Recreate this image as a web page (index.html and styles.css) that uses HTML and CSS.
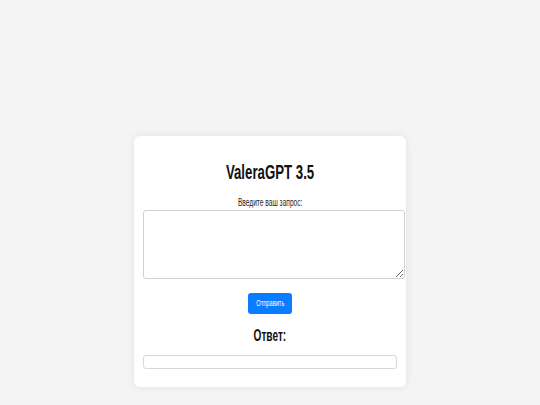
FILE: index.html
```html
<!DOCTYPE html>
<html lang="ru">
<head>
<meta charset="utf-8">
<title>ValeraGPT 3.5</title>
<link rel="stylesheet" href="styles.css">
</head>
<body>
<main class="card">
  <h1 class="title"><span class="sq">ValeraGPT 3.5</span></h1>
  <label class="label" for="q"><span class="sq">Введите ваш запрос:</span></label>
  <textarea id="q" class="prompt"></textarea>
  <div class="actions">
    <button class="send" type="button"><span class="sq">Отправить</span></button>
  </div>
  <h2 class="answer-title"><span class="sq">Ответ:</span></h2>
  <div class="answer"></div>
</main>
</body>
</html>
```

FILE: styles.css
```css
html, body {
  margin: 0;
  padding: 0;
}
body {
  background: #f4f4f4;
  font-family: "Liberation Sans", Arial, sans-serif;
  color: #222;
  min-height: 405px;
}
.card {
  box-sizing: border-box;
  width: 272px;
  margin: 136px auto 0;
  padding: 25px 9px 18px;
  background: #fff;
  border-radius: 6px;
  box-shadow: 0 0 8px rgba(0, 0, 0, 0.08);
  display: flex;
  flex-direction: column;
  align-items: stretch;
}
.sq {
  display: inline-block;
  transform: scaleX(0.63);
  transform-origin: center;
  white-space: nowrap;
}
.title {
  margin: 0;
  font-size: 21px;
  line-height: 21px;
  font-weight: bold;
  text-align: center;
  color: #111;
}
.label {
  display: block;
  margin-top: 14px;
  font-size: 10.5px;
  line-height: 12px;
  text-align: center;
  color: #1e1e1e;
}
.prompt {
  display: block;
  box-sizing: border-box;
  width: 262px;
  height: 69px;
  margin: 2px 0 0;
  padding: 4px;
  border: 1px solid #d0d0d0;
  border-radius: 3px;
  background: #fff;
  font-family: inherit;
}
.actions {
  display: flex;
  justify-content: center;
  margin-top: 14px;
}
.send {
  width: 44px;
  height: 21px;
  padding: 0;
  border: none;
  border-radius: 3px;
  background: #0a7cff;
  color: #fff;
  font-family: inherit;
  font-size: 9px;
  line-height: 21px;
}
.answer-title {
  margin: 14px 0 0;
  font-size: 16px;
  line-height: 16px;
  font-weight: bold;
  text-align: center;
  color: #111;
}
.answer {
  box-sizing: border-box;
  height: 14px;
  margin-top: 11px;
  border: 1px solid #d8d8d8;
  border-radius: 3px;
  background: #fff;
}
```
